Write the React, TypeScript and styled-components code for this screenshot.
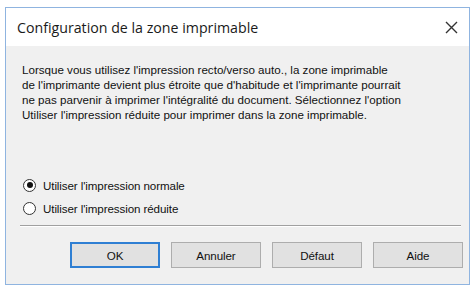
import React from "react";
import styled, { createGlobalStyle } from "styled-components";

const Global = createGlobalStyle`
  html, body { margin: 0; padding: 0; background: #ffffff; }
  body { font-family: "Liberation Sans", Arial, sans-serif; }
`;

const Page = styled.div`
  padding: 7px 0 0 5px;
`;

const Window = styled.div`
  width: 463px;
  height: 276px;
  border: 1px solid #8fb4e0;
  background: #f0f0f0;
  display: flex;
  flex-direction: column;
`;

const TitleBar = styled.div`
  height: 38px;
  background: #ffffff;
  display: flex;
  align-items: center;
  justify-content: space-between;
  padding: 0 10px 0 11px;
`;

const Title = styled.div`
  font-family: "Open Sans", "Liberation Sans", sans-serif;
  font-size: 14.2px;
  color: #1a1a1a;
`;

const Close = styled.div`
  width: 16px;
  height: 16px;
  display: flex;
  align-items: center;
  justify-content: center;
`;

const Body = styled.div`
  flex: 1;
  display: flex;
  flex-direction: column;
  padding: 16px 6px 0 14px;
`;

const Message = styled.p`
  margin: 0;
  font-size: 11.6px;
  line-height: 15px;
  color: #111;
  padding-left: 2px;
  white-space: nowrap;
`;

const Options = styled.div`
  margin-top: 55px;
  display: flex;
  flex-direction: column;
  gap: 7px;
  padding-left: 3px;
`;

const OptionRow = styled.label`
  display: flex;
  align-items: center;
  gap: 7px;
  font-size: 11.6px;
  letter-spacing: -0.1px;
  color: #111;
  height: 16px;
`;

const RadioCircle = styled.span<{ $checked?: boolean }>`
  box-sizing: border-box;
  width: 13px;
  height: 13px;
  border-radius: 50%;
  border: 1px solid #333;
  background: #fff;
  display: flex;
  align-items: center;
  justify-content: center;
  &::after {
    content: "";
    width: 6px;
    height: 6px;
    border-radius: 50%;
    background: ${(p) => (p.$checked ? "#111" : "transparent")};
  }
`;

const Separator = styled.div`
  margin: 9px 2px 0 0;
  height: 1px;
  background: #a0a0a0;
  border-bottom: 1px solid #ffffff;
`;

const ButtonRow = styled.div`
  display: flex;
  justify-content: flex-end;
  gap: 11px;
  margin-top: 15px;
`;

const Button = styled.div<{ $primary?: boolean }>`
  box-sizing: border-box;
  width: 90px;
  height: 26px;
  background: #e1e1e1;
  border: ${(p) => (p.$primary ? "2px solid #2f7fd3" : "1px solid #adadad")};
  display: flex;
  align-items: center;
  justify-content: center;
  font-size: 11.6px;
  letter-spacing: -0.1px;
  color: #111;
`;

export default function App() {
  return (
    <Page>
      <Global />
      <Window>
        <TitleBar>
          <Title>Configuration de la zone imprimable</Title>
          <Close>
            <svg width="13" height="13" viewBox="0 0 13 13">
              <path d="M1 1 L12 12 M12 1 L1 12" stroke="#333" strokeWidth="1.4" />
            </svg>
          </Close>
        </TitleBar>
        <Body>
          <Message>
            Lorsque vous utilisez l'impression recto/verso auto., la zone imprimable
            <br />
            de l'imprimante devient plus étroite que d'habitude et l'imprimante pourrait
            <br />
            ne pas parvenir à imprimer l'intégralité du document. Sélectionnez l'option
            <br />
            Utiliser l'impression réduite pour imprimer dans la zone imprimable.
          </Message>
          <Options>
            <OptionRow>
              <RadioCircle $checked />
              Utiliser l'impression normale
            </OptionRow>
            <OptionRow>
              <RadioCircle />
              Utiliser l'impression réduite
            </OptionRow>
          </Options>
          <Separator />
          <ButtonRow>
            <Button $primary>OK</Button>
            <Button>Annuler</Button>
            <Button>Défaut</Button>
            <Button>Aide</Button>
          </ButtonRow>
        </Body>
      </Window>
    </Page>
  );
}
